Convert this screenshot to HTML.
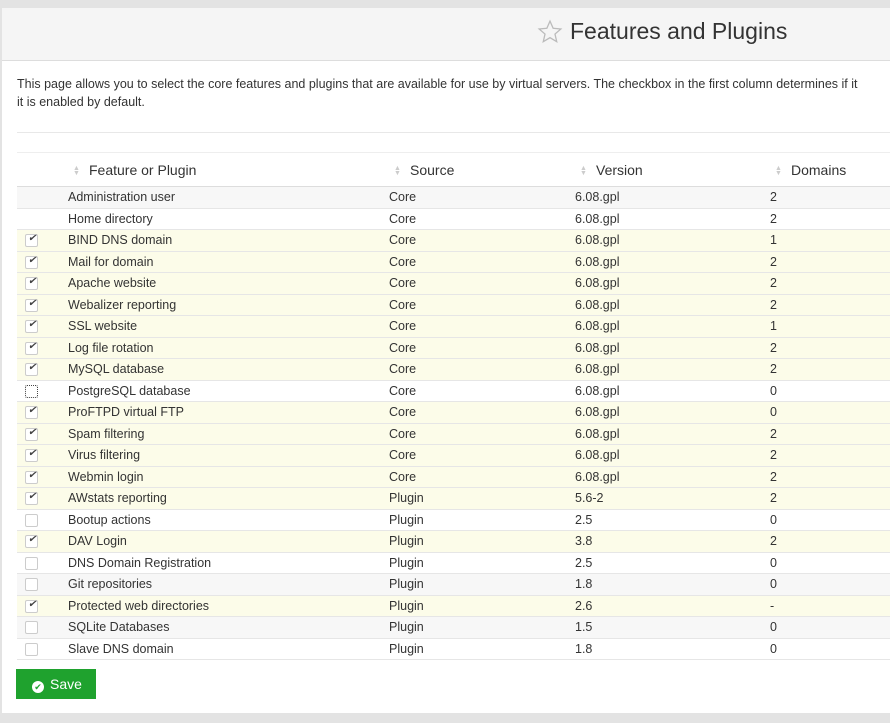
<!DOCTYPE html>
<html><head><style>
body{margin:0;width:890px;height:723px;background:#e3e3e3;font-family:"Liberation Sans",sans-serif;overflow:hidden;position:relative}
.wrap{position:absolute;left:2px;top:8px;width:900px;height:705px;background:#fff}
.hdr{height:52px;background:#f5f5f5;border-bottom:1px solid #ddd;position:relative}
.hdr .t{position:absolute;left:568px;top:10px;font-size:23px;color:#333}
.hdr svg{position:absolute;left:535px;top:11px}
.desc{position:absolute;left:15px;top:67px;font-size:12.5px;line-height:18px;color:#333;width:890px;white-space:nowrap}
.hr{position:absolute;left:15px;top:124px;width:880px;border-top:1px solid #e8e8e8}
table{position:absolute;left:15px;top:144px;border-collapse:collapse;width:890px;font-size:12.5px;color:#333}
th{height:33px;padding:0;text-align:left;font-weight:normal;font-size:14px;color:#333;border-top:1px solid #eee;border-bottom:1px solid #ddd}
td{height:20.5px;padding:0;border-top:1px solid #e6e6e6}
tr.y td{background:#fcfce9}tr.g td{background:#f7f7f7}
.cb{display:inline-block;width:11px;height:11px;border:1px solid #ccc;border-radius:2px;margin-left:8px;vertical-align:middle;background:#fff;position:relative}
.cb.c:after{content:"\2714";position:absolute;left:2px;top:-2px;font-size:10px;color:#444}
.cb.d{border:1px dotted #444}
.s{display:inline-block;width:8px;margin:0 8px 0 5px;vertical-align:middle;line-height:5px;font-size:7px;color:#ccc}
.btn{position:absolute;left:14px;top:661px;width:80px;height:30px;background:#1fa22e;color:#fff;font-size:14px;line-height:30px}
.btn span{display:inline-block;width:12px;height:12px;border-radius:50%;background:#fff;color:#1fa22e;font-size:9px;line-height:12px;text-align:center;margin:0 6px 0 16px;vertical-align:-1px}
</style></head><body><div class="wrap">
<div class="hdr"><svg width="26" height="26" viewBox="0 0 24 24"><path d="M12 2l2.9 6.6 7.1.6-5.4 4.7 1.6 7-6.2-3.7-6.2 3.7 1.6-7L2 9.2l7.1-.6z" fill="none" stroke="#bbb" stroke-width="1.2"/></svg><div class="t">Features and Plugins</div></div>
<div class="desc">This page allows you to select the core features and plugins that are available for use by virtual servers. The checkbox in the first column determines if it<br>it is enabled by default.</div>
<div class="hr"></div>
<table>
<tr><th style="width:51px"></th><th style="width:321px"><span class="s">▲<br>▼</span>Feature or Plugin</th><th style="width:186px"><span class="s">▲<br>▼</span>Source</th><th style="width:195px"><span class="s">▲<br>▼</span>Version</th><th><span class="s">▲<br>▼</span>Domains</th></tr>
<tr class="g"><td></td><td>Administration user</td><td>Core</td><td>6.08.gpl</td><td>2</td></tr>
<tr><td></td><td>Home directory</td><td>Core</td><td>6.08.gpl</td><td>2</td></tr>
<tr class="y"><td><i class="cb c"></i></td><td>BIND DNS domain</td><td>Core</td><td>6.08.gpl</td><td>1</td></tr>
<tr class="y"><td><i class="cb c"></i></td><td>Mail for domain</td><td>Core</td><td>6.08.gpl</td><td>2</td></tr>
<tr class="y"><td><i class="cb c"></i></td><td>Apache website</td><td>Core</td><td>6.08.gpl</td><td>2</td></tr>
<tr class="y"><td><i class="cb c"></i></td><td>Webalizer reporting</td><td>Core</td><td>6.08.gpl</td><td>2</td></tr>
<tr class="y"><td><i class="cb c"></i></td><td>SSL website</td><td>Core</td><td>6.08.gpl</td><td>1</td></tr>
<tr class="y"><td><i class="cb c"></i></td><td>Log file rotation</td><td>Core</td><td>6.08.gpl</td><td>2</td></tr>
<tr class="y"><td><i class="cb c"></i></td><td>MySQL database</td><td>Core</td><td>6.08.gpl</td><td>2</td></tr>
<tr><td><i class="cb d"></i></td><td>PostgreSQL database</td><td>Core</td><td>6.08.gpl</td><td>0</td></tr>
<tr class="y"><td><i class="cb c"></i></td><td>ProFTPD virtual FTP</td><td>Core</td><td>6.08.gpl</td><td>0</td></tr>
<tr class="y"><td><i class="cb c"></i></td><td>Spam filtering</td><td>Core</td><td>6.08.gpl</td><td>2</td></tr>
<tr class="y"><td><i class="cb c"></i></td><td>Virus filtering</td><td>Core</td><td>6.08.gpl</td><td>2</td></tr>
<tr class="y"><td><i class="cb c"></i></td><td>Webmin login</td><td>Core</td><td>6.08.gpl</td><td>2</td></tr>
<tr class="y"><td><i class="cb c"></i></td><td>AWstats reporting</td><td>Plugin</td><td>5.6-2</td><td>2</td></tr>
<tr><td><i class="cb"></i></td><td>Bootup actions</td><td>Plugin</td><td>2.5</td><td>0</td></tr>
<tr class="y"><td><i class="cb c"></i></td><td>DAV Login</td><td>Plugin</td><td>3.8</td><td>2</td></tr>
<tr><td><i class="cb"></i></td><td>DNS Domain Registration</td><td>Plugin</td><td>2.5</td><td>0</td></tr>
<tr class="g"><td><i class="cb"></i></td><td>Git repositories</td><td>Plugin</td><td>1.8</td><td>0</td></tr>
<tr class="y"><td><i class="cb c"></i></td><td>Protected web directories</td><td>Plugin</td><td>2.6</td><td>-</td></tr>
<tr class="g"><td><i class="cb"></i></td><td>SQLite Databases</td><td>Plugin</td><td>1.5</td><td>0</td></tr>
<tr><td style="border-bottom:1px solid #e6e6e6"><i class="cb"></i></td><td style="border-bottom:1px solid #e6e6e6">Slave DNS domain</td><td style="border-bottom:1px solid #e6e6e6">Plugin</td><td style="border-bottom:1px solid #e6e6e6">1.8</td><td style="border-bottom:1px solid #e6e6e6">0</td></tr>
</table>
<div class="btn"><span>✔</span>Save</div>
</div></body></html>
